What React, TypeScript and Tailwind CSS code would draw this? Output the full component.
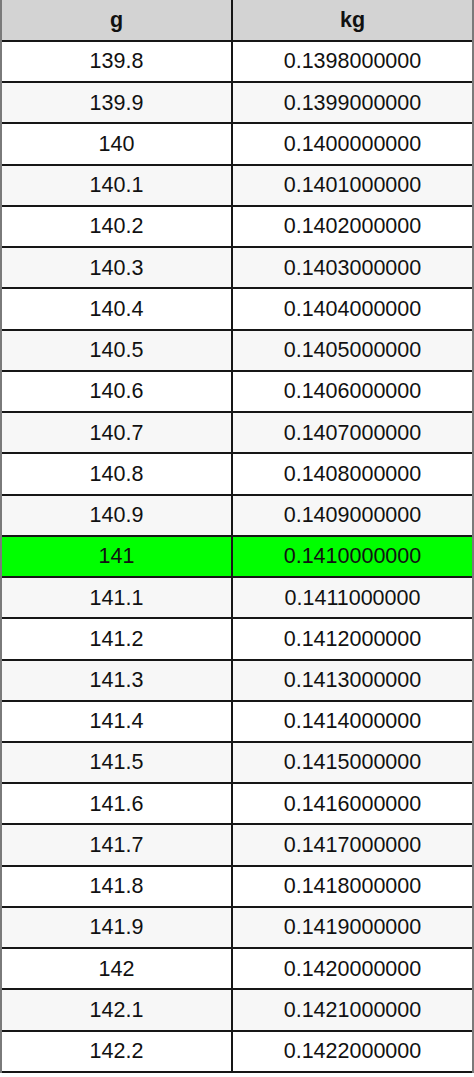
const rows: [string, string][] = [];
for (let i = 0; i < 25; i++) {
  const tenths = 1398 + i;
  const g = tenths % 10 === 0 ? String(tenths / 10) : (tenths / 10).toFixed(1);
  const kg = "0." + String(tenths) + "000000";
  rows.push([g, kg]);
}

export default function App() {
  return (
    <div className="w-[474px] h-[1077px] bg-white" style={{ fontFamily: '"Liberation Sans", Arial, sans-serif' }}>
      <div className="border-x-2 border-[#7a7a7a] flex flex-col">
        <div className="grid grid-cols-[231px_1fr] h-[42px] bg-[#d3d3d3] border-b-2 border-[#161616] text-[21.5px] font-bold text-[#111]">
          <div className="flex items-center justify-center border-r-2 border-[#161616]">g</div>
          <div className="flex items-center justify-center">kg</div>
        </div>
        {rows.map(([g, kg], i) => {
          const green = g === "141";
          const bg = green ? "bg-[#00ff00]" : i % 2 === 1 ? "bg-[#f7f7f7]" : "bg-white";
          return (
            <div
              key={g}
              className={`grid grid-cols-[231px_1fr] h-[41.24px] border-b-2 border-[#161616] text-[21.5px] text-[#111] ${bg}`}
            >
              <div className="flex items-center justify-center border-r-2 border-[#161616]">{g}</div>
              <div className="flex items-center justify-center">{kg}</div>
            </div>
          );
        })}
      </div>
    </div>
  );
}
